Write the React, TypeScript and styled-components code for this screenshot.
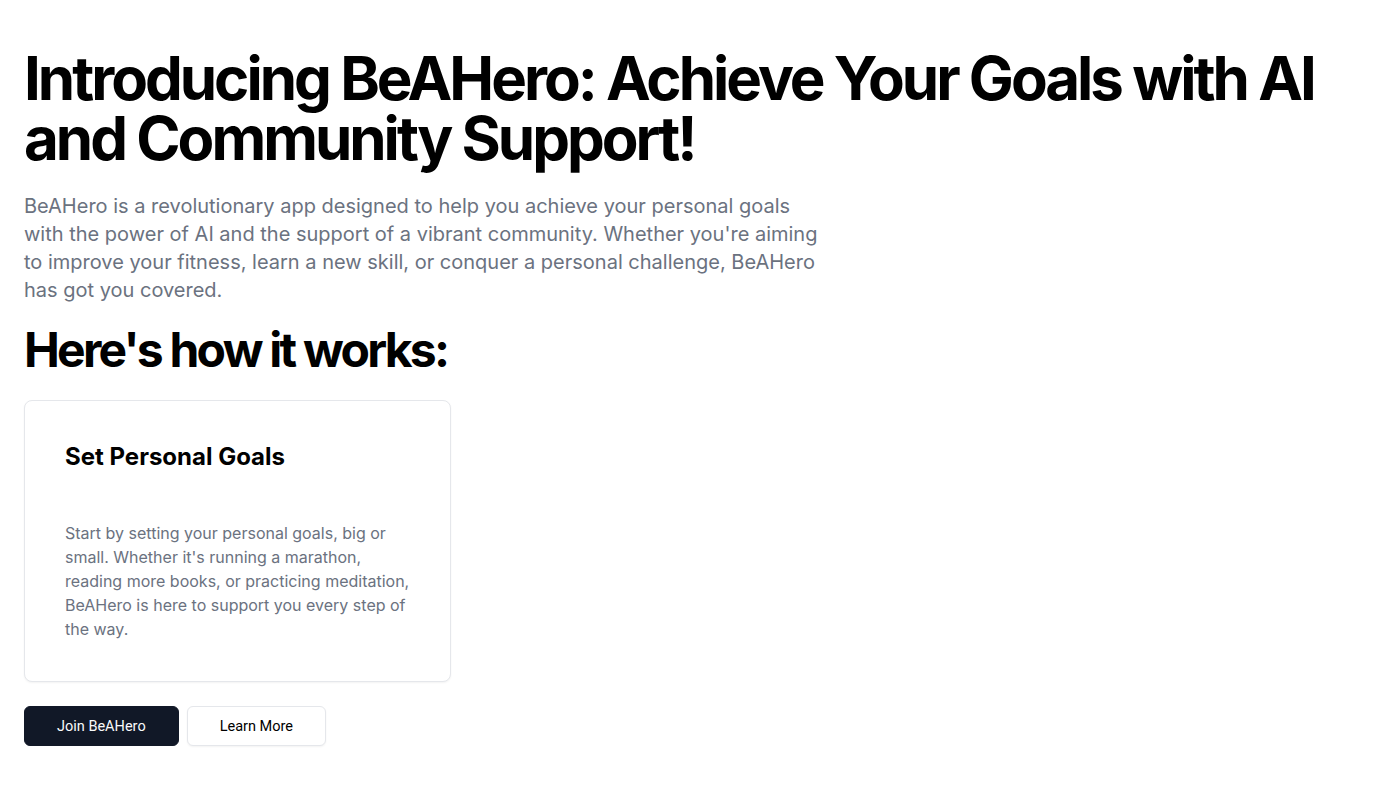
import React from "react";
import styled, { createGlobalStyle } from "styled-components";

const GlobalStyle = createGlobalStyle`
  html, body { margin: 0; padding: 0; background: #ffffff; }
  body { font-family: Inter, "Noto Sans", sans-serif; color: #000000; }
  * { box-sizing: border-box; }
`;

const Page = styled.main`
  padding: 48px 24px;
  display: flex;
  flex-direction: column;
`;

const Title = styled.h1`
  margin: 0;
  font-family: Inter, sans-serif;
  font-size: 60px;
  line-height: 60px;
  font-weight: 700;
  letter-spacing: -0.05em;
  color: #000000;
`;

const Lead = styled.p`
  margin: 24px 0 0;
  max-width: 800px;
  font-family: Inter, sans-serif;
  font-size: 20px;
  line-height: 28px;
  color: #6b7280;
`;

const SectionTitle = styled.h2`
  margin: 22px 0 0;
  font-family: Inter, sans-serif;
  font-size: 48px;
  line-height: 48px;
  font-weight: 700;
  letter-spacing: -0.057em;
  color: #000000;
`;

const Grid = styled.div`
  margin-top: 26px;
  display: grid;
  grid-template-columns: repeat(3, 1fr);
  gap: 24px;
`;

const Card = styled.div`
  border: 1px solid #e5e7eb;
  border-radius: 8px;
  background: #fff;
  box-shadow: 0 1px 2px 0 rgba(0, 0, 0, 0.05);
  padding: 40px;
  display: flex;
  flex-direction: column;
  gap: 48px;
`;

const CardTitle = styled.h3`
  margin: 0;
  font-family: Inter, sans-serif;
  font-size: 24px;
  line-height: 32px;
  font-weight: 700;
  letter-spacing: 0;
  color: #000000;
`;

const CardText = styled.p`
  margin: 0;
  font-family: Inter, sans-serif;
  font-size: 16px;
  line-height: 24px;
  color: #6b7280;
`;

const Actions = styled.div`
  margin-top: 24px;
  display: flex;
  gap: 8px;
`;

const Button = styled.button<{ $primary?: boolean }>`
  height: 40px;
  padding: 0 32px;
  border-radius: 6px;
  font-family: Roboto, sans-serif;
  font-size: 14.5px;
  font-weight: 400;
  cursor: pointer;
  border: 1px solid ${(p) => (p.$primary ? "#111827" : "#e5e7eb")};
  background: ${(p) => (p.$primary ? "#111827" : "#ffffff")};
  color: ${(p) => (p.$primary ? "#f9fafb" : "#000000")};
  box-shadow: ${(p) => (p.$primary ? "none" : "0 1px 2px 0 rgba(0,0,0,0.05)")};
`;

export default function App() {
  return (
    <>
      <GlobalStyle />
      <Page>
        <Title>
          Introducing BeAHero: Achieve Your Goals with AI and Community Support!
        </Title>
        <Lead>
          BeAHero is a revolutionary app designed to help you achieve your personal goals with the
          power of AI and the support of a vibrant community. Whether you're aiming to improve your
          fitness, learn a new skill, or conquer a personal challenge, BeAHero has got you covered.
        </Lead>
        <SectionTitle>Here's how it works:</SectionTitle>
        <Grid>
          <Card>
            <CardTitle>Set Personal Goals</CardTitle>
            <CardText>
              Start by setting your personal goals, big or small. Whether it's running a marathon,
              reading more books, or practicing meditation, BeAHero is here to support you every
              step of the way.
            </CardText>
          </Card>
        </Grid>
        <Actions>
          <Button $primary>Join BeAHero</Button>
          <Button>Learn More</Button>
        </Actions>
      </Page>
    </>
  );
}
